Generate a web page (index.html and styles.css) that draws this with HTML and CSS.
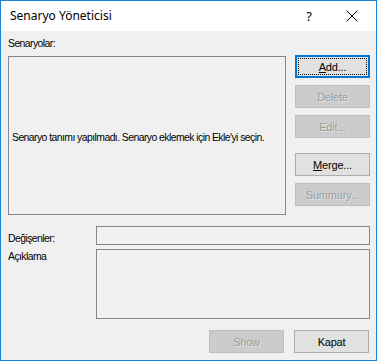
FILE: index.html
```html
<!DOCTYPE html>
<html lang="tr">
<head>
    <meta charset="UTF-8">
    <title>Senaryo Yöneticisi</title>
    <link rel="stylesheet" href="styles.css">
</head>
<body>
    <div class="window">
        <div class="titlebar">
            <span class="title">Senaryo Yöneticisi</span>
            <span class="help">?</span>
            <svg class="close" width="12" height="12" viewBox="0 0 12 12">
                <path d="M0.5 0.5 L11.5 11.5 M11.5 0.5 L0.5 11.5" stroke="#000" stroke-width="1" fill="none"/>
            </svg>
        </div>
        <div class="content">
            <div class="top-row">
                <div class="list-col">
                    <div class="label">Senaryolar:</div>
                    <div class="listbox">
                        <span class="empty-msg">Senaryo tanımı yapılmadı. Senaryo eklemek için Ekle'yi seçin.</span>
                    </div>
                </div>
                <div class="button-col">
                    <button class="btn default"><span class="focus"><u>A</u>dd...</span></button>
                    <button class="btn" disabled>Delete</button>
                    <button class="btn" disabled>Edit...</button>
                    <button class="btn spaced"><u>M</u>erge...</button>
                    <button class="btn" disabled>Summary...</button>
                </div>
            </div>
            <div class="field-row first">
                <span class="field-label">Değişenler:</span>
                <div class="textbox"></div>
            </div>
            <div class="field-row">
                <span class="field-label">Açıklama</span>
                <div class="textbox tall"></div>
            </div>
            <div class="footer">
                <button class="btn" disabled>Show</button>
                <button class="btn">Kapat</button>
            </div>
        </div>
    </div>
</body>
</html>
```

FILE: styles.css
```css
body {
    margin: 0;
    background-color: #fff;
    font-family: 'Liberation Sans', Arial, sans-serif;
    font-size: 10.4px;
    letter-spacing: -0.55px;
    color: #000;
}

.window {
    width: 377px;
    height: 361px;
    box-sizing: border-box;
    border: 1px solid #1883d7;
    background: #f0f0f0;
    display: flex;
    flex-direction: column;
}

.titlebar {
    height: 30px;
    background: #fff;
    display: flex;
    align-items: center;
    padding-left: 9px;
    letter-spacing: 0;
}

.title {
    font-family: 'Noto Sans', 'Open Sans', sans-serif;
    font-size: 12px;
    flex: 1;
    padding-bottom: 1px;
}

.help {
    font-family: 'Noto Sans', sans-serif;
    font-size: 13px;
    margin-right: 34px;
}

.close {
    margin-right: 18px;
}

.content {
    padding: 6px 6px 0 7px;
}

.top-row {
    display: flex;
    gap: 9px;
}

.label {
    height: 13px;
    line-height: 13px;
    margin-bottom: 6px;
}

.listbox {
    width: 278px;
    height: 159px;
    box-sizing: border-box;
    border: 1px solid #828790;
    display: flex;
    align-items: center;
    padding-left: 3px;
    padding-top: 3px;
}

.empty-msg {
    white-space: nowrap;
}

.button-col {
    margin-top: 18px;
    display: flex;
    flex-direction: column;
    gap: 7px;
}

.btn {
    width: 75px;
    height: 23px;
    box-sizing: border-box;
    background: #e1e1e1;
    border: 1px solid #adadad;
    font-family: 'Liberation Sans', Arial, sans-serif;
    font-size: 11px;
    letter-spacing: -0.2px;
    color: #000;
    padding: 0;
}

.btn:disabled {
    background: #cccccc;
    border-color: #bfbfbf;
    color: #9d9d9d;
    text-shadow: 1px 1px 0 #e4e4e4;
}

.btn.default {
    border: 2px solid #0078d7;
    padding: 1px;
}

.focus {
    display: flex;
    align-items: center;
    justify-content: center;
    height: 100%;
    box-sizing: border-box;
    border: 1px dotted #000;
}

.btn.spaced {
    margin-top: 8px;
}

.field-row {
    display: flex;
    margin-top: 4px;
}

.field-row.first {
    margin-top: 11px;
}

.field-label {
    width: 88px;
    line-height: 13px;
    padding-top: 1px;
}

.field-row.first .field-label {
    padding-top: 6px;
}

.textbox {
    width: 274px;
    height: 19px;
    box-sizing: border-box;
    border: 1px solid #828790;
}

.textbox.tall {
    height: 70px;
}

.footer {
    display: flex;
    justify-content: flex-end;
    gap: 10px;
    margin-top: 11px;
    padding-right: 1px;
}
```
